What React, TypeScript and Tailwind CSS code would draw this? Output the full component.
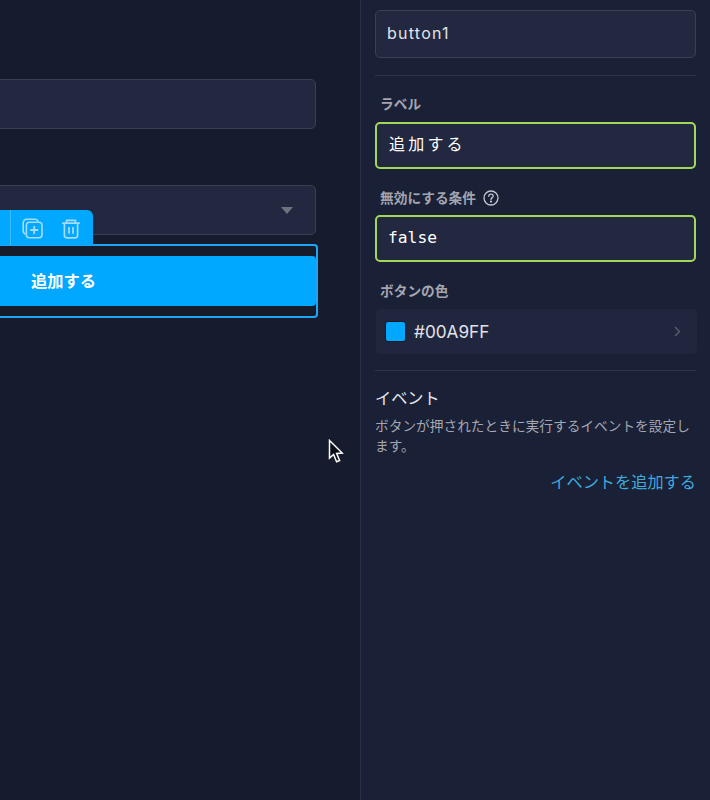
const jp = "font-['Inter','Noto_Sans_CJK_JP',sans-serif]";

function Cursor() {
  return (
    <svg width="18" height="26" viewBox="0 0 18 26" className="absolute left-[328px] top-[439px]">
      <path
        d="M1.5 1.5 L1.5 19 L5.6 15.4 L8.6 22.8 L11.6 21.5 L8.6 14.4 L14.2 14 Z"
        fill="#0b0e18"
        stroke="#ffffff"
        strokeWidth="1.5"
        strokeLinejoin="miter"
      />
    </svg>
  );
}

function CopyPlusIcon() {
  return (
    <svg width="22" height="22" viewBox="0 0 22 22" fill="none" stroke="#a6dcff" strokeWidth="1.6">
      <path d="M3 16 C1.8 15.4 1.2 14.4 1.2 13 V5 C1.2 2.8 2.8 1.2 5 1.2 H13 C14.4 1.2 15.4 1.8 16 3" strokeLinecap="round" />
      <rect x="4.4" y="4.2" width="15.6" height="15.6" rx="3" />
      <path d="M12.2 8 V16 M8.2 12 H16.2" strokeWidth="1.8" />
    </svg>
  );
}

function TrashIcon() {
  return (
    <svg width="18" height="20" viewBox="0 0 18 20" fill="none" stroke="#a6dcff" strokeWidth="1.7">
      <path d="M0.8 4.2 H17.2" strokeLinecap="round" />
      <path d="M4.6 4 V1.4 H13.4 V4" />
      <path d="M2.4 4.4 V16.6 C2.4 17.9 3.3 18.8 4.6 18.8 H13.4 C14.7 18.8 15.6 17.9 15.6 16.6 V4.4" />
      <path d="M7 8 V14.8 M11 8 V14.8" />
    </svg>
  );
}

function HelpIcon() {
  return (
    <svg width="16" height="16" viewBox="0 0 16 16" fill="none" stroke="#c4c6cf" strokeWidth="1.3">
      <circle cx="8" cy="8" r="7" />
      <path d="M5.8 6.3 C5.8 5 6.8 4.2 8 4.2 C9.3 4.2 10.2 5 10.2 6.1 C10.2 7.6 8 7.7 8 9.4" strokeLinecap="round" />
      <circle cx="8" cy="11.6" r="0.5" fill="#c4c6cf" />
    </svg>
  );
}

function Label({ children }: { children: React.ReactNode }) {
  return <div className="h-[18px] pl-[5px] text-[13.7px] leading-[18px] font-semibold text-[#a3a5b0]">{children}</div>;
}

function GreenInput({ children, mono }: { children: React.ReactNode; mono?: boolean }) {
  return (
    <div
      className={
        "flex h-[47px] items-center rounded-[5px] border-2 border-[#a2d85a] bg-[#222840] text-white " +
        (mono ? "pl-[11px] font-['DejaVu_Sans_Mono',monospace] text-[16.3px]" : "pb-[3px] pl-[12px] text-[16px] tracking-[3.2px]")
      }
    >
      {children}
    </div>
  );
}

export default function App() {
  return (
    <div className={"flex h-[800px] w-[710px] overflow-hidden bg-[#161b2d] " + jp}>
      <div className="relative w-[360px] shrink-0">
        <div className="-ml-[20px] flex w-[336px] flex-col pt-[79px]">
          <div className="h-[50px] rounded-[5px] border border-[#3a3f54] bg-[#222840]" />
          <div className="mt-[56px] flex h-[50px] items-center justify-end rounded-[5px] border border-[#3a3f54] bg-[#222840] pr-[22px]">
            <div className="h-0 w-0 border-x-[6px] border-t-[7px] border-x-transparent border-t-[#70737f]" />
          </div>
          <div className="mt-[9px] -mr-[2px] flex h-[74px] items-center rounded-[4px] border-2 border-[#1ea6f5] bg-[#171c2c]">
            <div className="flex h-[50px] w-full items-center rounded-[4px] bg-[#00a9ff] pl-[49px] text-[16.3px] font-bold text-white">
              追加する
            </div>
          </div>
        </div>
        <div className="absolute left-0 top-[210px] flex h-[35px] w-[93px] items-center rounded-tr-[6px] bg-[#00a9ff]">
          <div className="ml-[10px] h-full w-px bg-[#3dbdfb]" />
          <div className="ml-[11px] mt-[2px] flex items-center gap-[18px]">
            <CopyPlusIcon />
            <TrashIcon />
          </div>
        </div>
        <Cursor />
      </div>

      <div className="flex h-full flex-1 flex-col border-l border-[#2a3048] bg-[#1a2036] pl-[14px] pr-[14px] pt-[10px]">
        <div className="flex h-[48px] shrink-0 items-center rounded-[5px] border border-[#3a3f54] bg-[#222840] pb-[2px] pl-[11px] text-[16px] tracking-[1.25px] text-[#e2e3e8]">
          button1
        </div>
        <div className="mt-[17px] h-px shrink-0 bg-[#2f3448]" />
        <div className="mt-[19px]">
          <Label>ラベル</Label>
        </div>
        <div className="mt-[9px]">
          <GreenInput>追加する</GreenInput>
        </div>
        <div className="mt-[20px] flex items-center gap-[7px]">
          <Label>無効にする条件</Label>
          <HelpIcon />
        </div>
        <div className="mt-[8px]">
          <GreenInput mono>false</GreenInput>
        </div>
        <div className="mt-[20px]">
          <Label>ボタンの色</Label>
        </div>
        <div className="-mr-px ml-px mt-[9px] flex h-[45px] items-center rounded-[4px] bg-[#21263f] pl-[9px] pr-[16px]">
          <div className="h-[21px] w-[21px] rounded-[3px] border border-[#14182a] bg-[#00a9ff]" />
          <span className="ml-[8px] text-[17.2px] text-[#e2e3e8]">#00A9FF</span>
          <svg width="7" height="11" viewBox="0 0 7 11" fill="none" stroke="#5a5f72" strokeWidth="1.4" className="ml-auto">
            <path d="M1 1 L5.5 5.5 L1 10" />
          </svg>
        </div>
        <div className="mt-[16px] h-px bg-[#2f3448]" />
        <div className="mt-[16px] text-[16.2px] leading-[22px] text-[#e6e7ec]">イベント</div>
        <p className="mt-[7px] text-[13.7px] leading-[20px] text-[#a4a7b3]">
          ボタンが押されたときに実行するイベントを設定します。
        </p>
        <div className="mt-[15px] text-right text-[16.2px] leading-[22px] text-[#3fa9dc]">イベントを追加する</div>
      </div>
    </div>
  );
}
